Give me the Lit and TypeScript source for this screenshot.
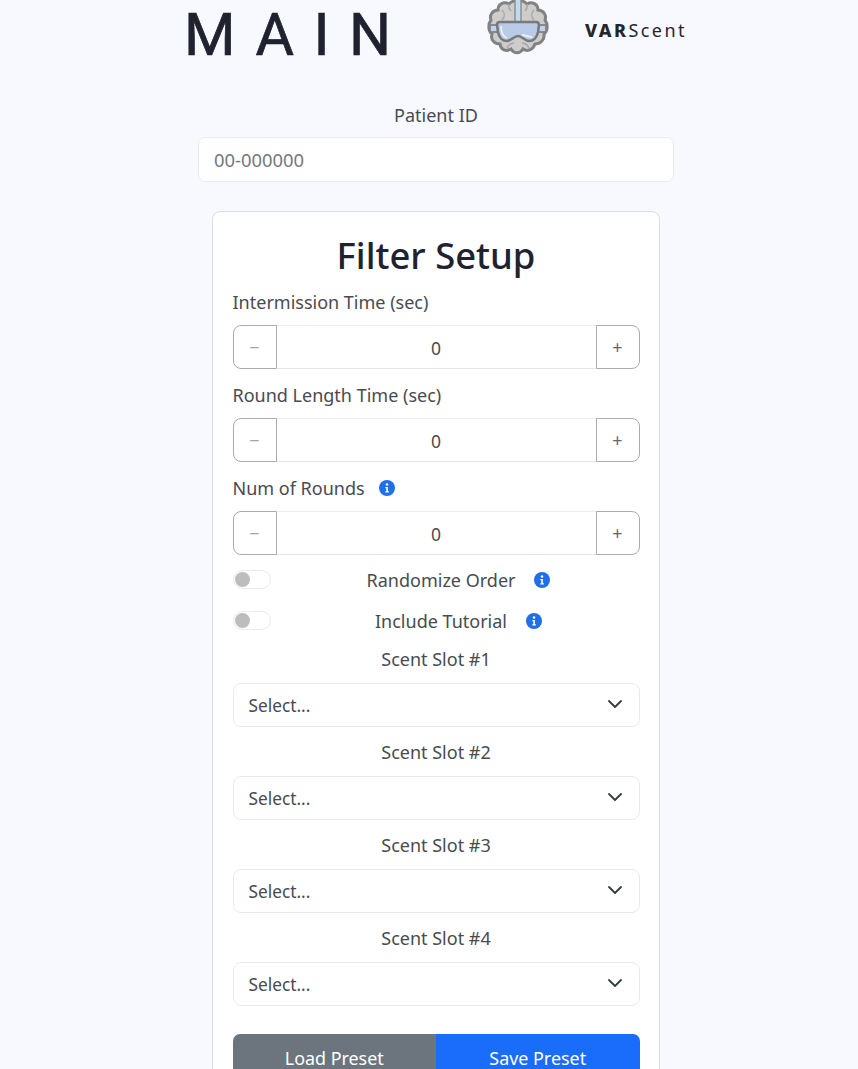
import { LitElement, html, css, svg } from "lit";
import { customElement } from "lit/decorators.js";

const info = html`<svg class="info" viewBox="0 0 16 16" aria-hidden="true">
  <circle cx="8" cy="8" r="8" fill="#1f6fe8"></circle>
  <circle cx="8" cy="4.6" r="1.25" fill="#fff"></circle>
  <path d="M6.4 7h2.5v4.2h1v1.3H6.3v-1.3h1V8.3h-.9z" fill="#fff"></path>
</svg>`;

const brain = svg`
  <path d="M21 4 C26 -1 34 -1 39 4 C44 1 50 4 50 10 C55 10 59 15 57 20 C60 24 60 31 56 34 C57 40 52 44 47 44 C45 50 39 52 35 49 C32 54 26 54 23 49 C18 52 13 50 12 44 C7 44 2 40 4 34 C0 31 0 24 3 20 C1 15 5 10 10 10 C10 4 16 1 21 4 Z" fill="#cfcdcb" stroke="#828284" stroke-width="3"></path>
  <path d="M14 10 C17 13 17 17 14 20 M46 10 C43 13 43 17 46 20 M21 4 C20 7 21 9 23 11 M39 4 C40 7 39 9 37 11 M19 48 C21 44 24 43 26 43 M41 48 C39 44 36 43 34 43" fill="none" stroke="#a9a8a8" stroke-width="1.5"></path>
  <rect x="27" y="-1" width="6" height="24" fill="#bcdcf2" stroke="#8a8a8c" stroke-width="1.4"></rect>
  <rect x="2" y="25" width="56" height="7" fill="#bcd4ee" stroke="#828284" stroke-width="1.8"></rect>
  <path d="M12 22 H48 C50 22 51 23 51 25 L50 32 C49 38 45 41 41 41 C37 41 34 36 30 36 C26 36 23 41 19 41 C15 41 11 38 10 32 L9 25 C9 23 10 22 12 22 Z" fill="#b9cbe6" stroke="#77797d" stroke-width="2.6"></path>
  <path d="M13 26 C13 33 16 37 19 38 M34 35 C37 35 40 37 44 37" fill="none" stroke="#e6f3fc" stroke-width="1.8"></path>
`;

@customElement("app-root")
export class AppRoot extends LitElement {
  static styles = css`
    :host {
      display: block;
      height: 1069px;
      overflow: hidden;
      background: #f8f9ff;
      font-family: "Noto Sans", "Open Sans", sans-serif;
      font-size: 18px;
      color: #484b50;
    }
    .header {
      display: flex;
      align-items: flex-start;
      height: 92px;
      padding-left: 184px;
    }
    .main {
      width: 304px;
      font-family: Roboto, sans-serif;
      font-size: 59px;
      line-height: 69px;
      font-weight: 400;
      -webkit-text-stroke: 0.7px #20222f;
      letter-spacing: 19.5px;
      color: #20222f;
    }
    .logo {
      width: 60px;
      height: 53px;
      flex: none;
      overflow: visible;
    }
    .brand {
      margin: 18px 0 0 37px;
      font-size: 18px;
      line-height: 24px;
      letter-spacing: 2.45px;
      color: #24262e;
      white-space: nowrap;
    }
    .brand b {
      font-weight: 800;
    }
    .content {
      padding-left: 14px;
    }
    .patient {
      width: 476px;
      margin: 0 auto;
    }
    .center {
      text-align: center;
      line-height: 24px;
      white-space: nowrap;
    }
    .patient .center {
      height: 45px;
      padding-top: 11px;
      box-sizing: border-box;
    }
    .field {
      box-sizing: border-box;
      width: 100%;
      height: 45px;
      padding: 0 15px;
      display: flex;
      align-items: center;
      background: #fff;
      border: 1px solid #e9eaee;
      border-radius: 7px;
      font-size: 18.4px;
      color: #74787e;
    }
    .card {
      box-sizing: border-box;
      width: 448px;
      margin: 29px auto 0;
      background: #fff;
      border: 1px solid #dcdde1;
      border-radius: 8px;
      padding: 20px 19.5px;
      height: 900px;
    }
    h1 {
      margin: -1px 0 0;
      font-size: 36.4px;
      line-height: 48px;
      font-weight: 500;
      text-align: center;
      color: #20222f;
    }
    .label {
      display: flex;
      align-items: center;
      gap: 14px;
      height: 24px;
      margin-top: 11px;
      margin-bottom: 11px;
      line-height: 24px;
    }
    .stepper + .label {
      margin-top: 14px;
    }
    .stepper {
      display: flex;
      height: 44px;
      box-sizing: border-box;
    }
    .stepper .btn {
      width: 44px;
      flex: none;
      box-sizing: border-box;
      border: 1px solid #a9abaf;
      display: flex;
      align-items: center;
      justify-content: center;
      color: #63676d;
      font-size: 18px;
    }
    .btn.minus {
      border-radius: 8px 0 0 8px;
      color: #a2a6ab;
    }
    .btn.plus {
      border-radius: 0 8px 8px 0;
    }
    .value {
      flex: 1;
      display: flex;
      align-items: center;
      justify-content: center;
      padding-top: 1px;
      border-top: 1px solid #ececef;
      border-bottom: 1px solid #e4e5e8;
      font-size: 17.5px;
    }
    .toggles {
      display: flex;
      flex-direction: column;
      gap: 17px;
      margin-top: 13px;
    }
    .switch-row {
      display: flex;
      align-items: center;
      height: 24px;
    }
    .switch {
      width: 38px;
      height: 19px;
      flex: none;
      box-sizing: border-box;
      border: 1px solid #e9eaec;
      border-radius: 10px;
      display: flex;
      align-items: center;
      padding-left: 1px;
      margin-bottom: 2px;
    }
    .switch i {
      display: block;
      width: 15px;
      height: 15px;
      border-radius: 50%;
      background: #bdbdbd;
    }
    .switch-label {
      flex: 1;
      display: flex;
      justify-content: center;
      align-items: center;
      gap: 19px;
      padding-left: 7px;
      line-height: 24px;
    }
    .info {
      width: 16px;
      height: 16px;
      flex: none;
    }
    .slots {
      display: flex;
      flex-direction: column;
      margin-top: 14px;
    }
    .slot .center {
      margin-bottom: 12px;
    }
    .slot + .slot {
      margin-top: 13px;
    }
    .select {
      box-sizing: border-box;
      height: 44px;
      display: flex;
      align-items: center;
      justify-content: space-between;
      padding: 1px 16px 0 15px;
      border: 1px solid #e9eaee;
      border-radius: 8px;
      font-size: 17.3px;
    }
    .chev {
      width: 16px;
      height: 16px;
      margin-bottom: 3px;
    }
    .actions {
      display: flex;
      margin-top: 28px;
      height: 48px;
      border-radius: 7px;
      overflow: hidden;
      font-size: 17.9px;
      line-height: 18px;
      color: #fff;
    }
    .actions div {
      flex: 1;
      display: flex;
      align-items: center;
      justify-content: center;
    }
    .load {
      background: #6c757d;
    }
    .save {
      background: #1a6dfb;
    }
  `;

  private stepper() {
    return html`<div class="stepper">
      <div class="btn minus">−</div>
      <div class="value">0</div>
      <div class="btn plus">+</div>
    </div>`;
  }

  render() {
    return html`
      <div class="header">
        <div class="main">MAIN</div>
        <svg class="logo" viewBox="0 0 60 53" aria-hidden="true">${brain}</svg>
        <div class="brand"><b>VAR</b>Scent</div>
      </div>
      <div class="content">
        <div class="patient">
          <div class="center">Patient ID</div>
          <div class="field">00-000000</div>
        </div>
        <div class="card">
          <h1>Filter Setup</h1>
          <div class="label">Intermission Time (sec)</div>
          ${this.stepper()}
          <div class="label">Round Length Time (sec)</div>
          ${this.stepper()}
          <div class="label">Num of Rounds ${info}</div>
          ${this.stepper()}
          <div class="toggles">
            ${["Randomize Order", "Include Tutorial"].map(
              (t) => html`<div class="switch-row">
                <div class="switch"><i></i></div>
                <div class="switch-label">${t} ${info}</div>
              </div>`
            )}
          </div>
          <div class="slots">
            ${[1, 2, 3, 4].map(
              (n) => html`<div class="slot">
                <div class="center">Scent Slot #${n}</div>
                <div class="select">
                  <span>Select...</span>
                  <svg class="chev" viewBox="0 0 16 16" aria-hidden="true">
                    <path d="M2 5l6 6 6-6" fill="none" stroke="#343a40" stroke-width="1.8" stroke-linecap="round" stroke-linejoin="round"></path>
                  </svg>
                </div>
              </div>`
            )}
          </div>
          <div class="actions">
            <div class="load">Load Preset</div>
            <div class="save">Save Preset</div>
          </div>
        </div>
      </div>
    `;
  }
}
